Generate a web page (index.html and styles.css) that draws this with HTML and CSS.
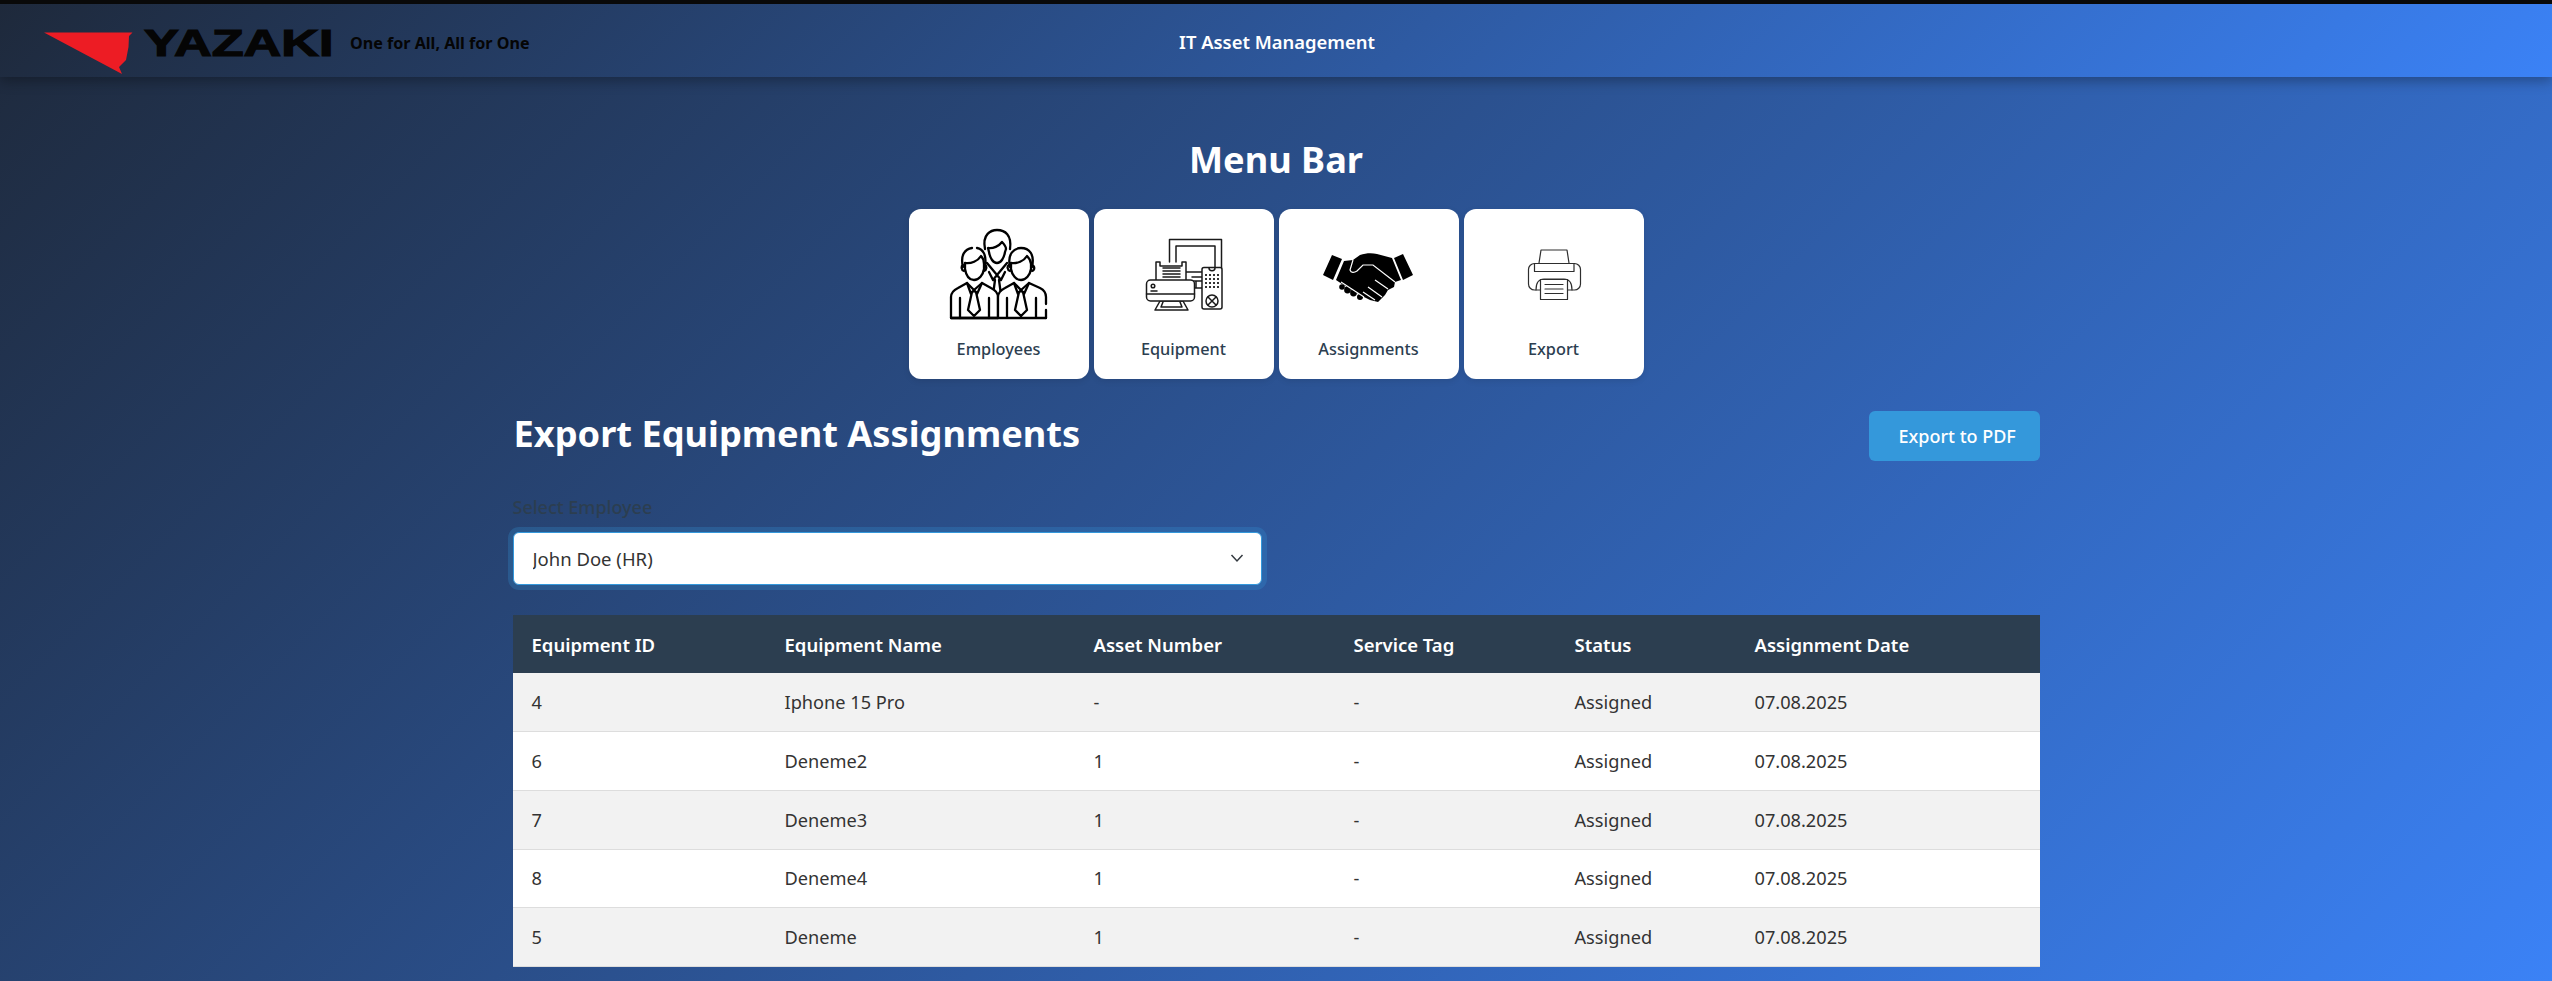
FILE: index.html
```html
<!DOCTYPE html>
<html lang="en">
<head>
<meta charset="utf-8">
<title>IT Asset Management</title>
<link rel="stylesheet" href="styles.css">
</head>
<body>
<div class="top-strip"></div>
<header class="app-header">
  <div class="brand">
    <svg class="brand-mark" viewBox="0 0 90 44" aria-hidden="true"><path d="M0 0.5 H88.500 L85 4 L84.500 15 L82 28 L75 35 L78 42 Z" fill="#ed1c24"/></svg>
    <span class="brand-name">YAZAKI</span>
    <span class="brand-tag">One for All, All for One</span>
  </div>
  <div class="app-title">IT Asset Management</div>
</header>
<main class="page">
  <h1 class="menu-title">Menu Bar</h1>
  <nav class="menu">
    <a class="menu-card">
      <svg class="menu-icon" viewBox="0 0 120 100" aria-hidden="true">
        <g class="ln">
          <path d="M46 24C43 9 52 5 58 5C66 5 73 10 71 24"/>
          <path d="M49 23C54 24 60 21 63 17C65 19 67 21 67 24L66 27C65 33 62 38 58 38C54 38 51 33 50 27Z"/>
          <path d="M48 38L58 50L68 38M58 50L54 55L50 47M58 50L62 55L66 47M56 55L54 70M60 55L62 70"/>
          <path class="wh" d="M24 42C21 30 26 24 33 23M38 23C44 24 48 30 46 42"/>
          <path class="wh" d="M26 38C32 39 39 36 42 31C44 33 45 36 45 39L45 44C44 50 40 55 35 55C30 55 27 50 26 44Z"/>
          <path d="M24 40C22 41 22 45 25 46M46 40C48 41 48 45 45 46"/>
          <path class="wh" d="M12 93V72C12 67 15 65 19 63L28 58L35 65L43 58L52 63C56 65 59 68 59 72V93Z"/>
          <path d="M28 58L32 69L35 65L38 69L43 58M33 67L29 85L35 91L41 85L37 67M21 73V93M50 73V93"/>
          <path class="wh" d="M71 42C68 29 75 23 82 23C90 23 96 29 93 42Z"/>
          <path class="wh" d="M72 38C78 39 85 36 88 31C90 33 92 36 92 39L92 44C91 50 87 55 82 55C77 55 73 50 72 44Z"/>
          <path d="M70 40C68 41 68 45 71 46M93 40C96 41 96 45 93 46"/>
          <path class="wh" d="M59 93V72C59 67 62 65 66 63L75 58L82 65L90 58L101 63C105 65 107 68 107 72V79M107 85V93Z"/>
          <path d="M59 93H107M75 58L79 69L82 65L85 69L90 58M80 67L76 85L82 91L88 85L84 67M68 73V93M97 73V93M12 93H59"/>
        </g>
      </svg>
      <span class="menu-label">Employees</span>
    </a>
    <a class="menu-card">
      <svg class="menu-icon" viewBox="-6 -5 120 100" aria-hidden="true">
        <g class="ln thin">
          <path d="M39.500 32V9.500H91.500V38"/>
          <path d="M46 32V16H85V38"/>
          <path d="M56 42H72M62 47H72M62 51H72M62 58H72M66 51V58"/>
          <path class="wh" d="M26 50V32H30V36H52V32H56V50"/>
          <path d="M33 38H50M33 41H50M33 44H50M33 47H50"/>
          <path class="wh" d="M30 71L25 80H58L53 71Z"/>
          <path d="M33 72L31 77H52L50 72"/>
          <rect class="wh" x="16.500" y="50" width="48" height="21" rx="4"/>
          <path d="M16.500 64H64.500M21 61H27"/>
          <circle cx="23" cy="56" r="1.800"/>
          <rect class="wh" x="72" y="37.500" width="20" height="41.500" rx="2"/>
          <path d="M79 38C79 41.500 85 41.500 85 38"/>
          <circle cx="82" cy="71" r="6"/>
          <path d="M78 67L86 75M86 67L78 75"/>
        </g>
        <g class="dots">
          <rect x="75" y="44" width="2" height="2"/><rect x="79" y="44" width="2" height="2"/><rect x="83" y="44" width="2" height="2"/><rect x="87" y="44" width="2" height="2"/>
          <rect x="75" y="48" width="2" height="2"/><rect x="79" y="48" width="2" height="2"/><rect x="83" y="48" width="2" height="2"/><rect x="87" y="48" width="2" height="2"/>
          <rect x="75" y="52" width="2" height="2"/><rect x="79" y="52" width="2" height="2"/><rect x="83" y="52" width="2" height="2"/><rect x="87" y="52" width="2" height="2"/>
          <rect x="75" y="56" width="2" height="2"/><rect x="79" y="56" width="2" height="2"/><rect x="83" y="56" width="2" height="2"/><rect x="87" y="56" width="2" height="2"/>
        </g>
      </svg>
      <span class="menu-label">Equipment</span>
    </a>
    <a class="menu-card">
      <svg class="menu-icon" viewBox="-1 -15 120 100" aria-hidden="true">
        <path d="M22 15L32 19L23 40L13 35ZM84 18L93 14L103 35L93 40Z"/>
        <path d="M34 21L43 20L50 15C56 13 62 13 67 14L82 18L91 40L85 42L84 47L78 50L75 55L68 62L60 60L52 56L32 44L26 40Z"/>
        <circle cx="32" cy="47" r="2.800"/><circle cx="37.500" cy="50" r="3.400"/><circle cx="43.500" cy="53" r="3.400"/><circle cx="50" cy="57" r="3"/>
        <path class="crease" d="M43 20L40 30C41 33 44 33 47 31L53 25L63 25L85 42M65 40L78 49M58 47L72 57M53 52L65 60M31 42L54 57"/>
      </svg>
      <span class="menu-label">Assignments</span>
    </a>
    <a class="menu-card">
      <svg class="menu-icon" viewBox="-16 -15 120 100" aria-hidden="true">
        <g class="ln hair">
          <path d="M29 23L31 10H57L59 23"/>
          <rect x="18.500" y="23.500" width="52" height="26.500" rx="6"/>
          <rect x="24.500" y="23.500" width="39.500" height="8"/>
          <path d="M26 50C26 43 28 39 34 39H54C60 39 62 43 62 50"/>
          <rect class="wh" x="30.500" y="39.500" width="27" height="20"/>
          <path d="M35 44.500H53M35 49H53M35 53.500H53"/>
        </g>
      </svg>
      <span class="menu-label">Export</span>
    </a>
  </nav>
  <section class="export-panel">
    <div class="panel-head">
      <h2 class="panel-title">Export Equipment Assignments</h2>
      <button class="export-btn" type="button">Export to PDF</button>
    </div>
    <div class="field">
      <label class="field-label" for="emp">Select Employee</label>
      <div class="select-wrap">
        <select id="emp" class="select"><option>John Doe (HR)</option></select>
        <svg class="chevron" viewBox="0 0 16 16" aria-hidden="true"><path d="M2.500 5L8 11L13.500 5" fill="none" stroke="#343a40" stroke-width="1.500"/></svg>
      </div>
    </div>
    <table class="assets">
      <colgroup><col class="c1"><col class="c2"><col class="c3"><col class="c4"><col class="c5"><col class="c6"></colgroup>
      <thead>
        <tr><th>Equipment ID</th><th>Equipment Name</th><th>Asset Number</th><th>Service Tag</th><th>Status</th><th>Assignment Date</th></tr>
      </thead>
      <tbody>
        <tr><td>4</td><td>Iphone 15 Pro</td><td>-</td><td>-</td><td>Assigned</td><td>07.08.2025</td></tr>
        <tr><td>6</td><td>Deneme2</td><td>1</td><td>-</td><td>Assigned</td><td>07.08.2025</td></tr>
        <tr><td>7</td><td>Deneme3</td><td>1</td><td>-</td><td>Assigned</td><td>07.08.2025</td></tr>
        <tr><td>8</td><td>Deneme4</td><td>1</td><td>-</td><td>Assigned</td><td>07.08.2025</td></tr>
        <tr><td>5</td><td>Deneme</td><td>1</td><td>-</td><td>Assigned</td><td>07.08.2025</td></tr>
      </tbody>
    </table>
  </section>
</main>
</body>
</html>
```

FILE: styles.css
```css
* { box-sizing: border-box; }
html, body { margin: 0; height: 100%; }
body {
  min-height: 981px;
  overflow: hidden;
  font-family: "Noto Sans", "Open Sans", sans-serif;
  color: #2c3e50;
  background: linear-gradient(135deg, #1e293b 0%, #3b82f6 100%);
}
.top-strip { height: 4px; background: #0a0a0a; }
.app-header {
  position: relative;
  height: 73px;
  display: flex;
  align-items: center;
  padding-left: 44px;
  background: linear-gradient(135deg, #1e293b 0%, #3b82f6 100%);
  box-shadow: 0 4px 12px rgba(0, 0, 0, 0.3);
}
.brand { display: flex; align-items: center; }
.brand-mark { width: 90px; height: 44px; margin-top: 26px; }
.brand-name {
  margin-left: 10px;
  margin-top: 6px;
  width: 206px;
  font-family: "Liberation Sans", sans-serif;
  font-weight: 700;
  font-size: 36px;
  line-height: 1;
  color: #050505;
  -webkit-text-stroke: 1.2px #050505;
  transform: scaleX(1.45);
  transform-origin: left center;
}
.brand-tag {
  margin-top: 4px;
  font-weight: 700;
  font-size: 16.100px;
  color: #050505;
  white-space: nowrap;
}
.app-title {
  position: absolute;
  left: 2px;
  right: 0;
  top: 27px;
  text-align: center;
  font-weight: 600;
  font-size: 18.400px;
  line-height: 22px;
  color: #fff;
}
.page { width: 1527px; margin: 0 auto; }
.menu-title {
  margin: 58px 0 0;
  text-align: center;
  font-weight: 700;
  font-size: 36.200px;
  line-height: 48px;
  color: #fff;
}
.menu { display: flex; justify-content: center; gap: 5px; margin-top: 26px; }
.menu-card {
  width: 180px;
  height: 170px;
  padding-top: 16px;
  display: flex;
  flex-direction: column;
  align-items: center;
  background: #fff;
  border-radius: 12px;
  box-shadow: 0 2px 6px rgba(0, 0, 0, 0.1);
}
.menu-icon { width: 120px; height: 100px; flex: none; }
.menu-label { margin-top: 14px; font-size: 16.300px; line-height: 20px; font-weight: 500; color: #2c3e50; }
.ln { fill: none; stroke: #000; stroke-width: 2.300; stroke-linejoin: round; stroke-linecap: round; }
.ln.thin { stroke-width: 1.500; stroke: #1a1a1a; }
.ln.hair { stroke-width: 1.200; stroke: #2e2e2e; }
.wh { fill: #fff; }
.dots { fill: #333; }
.crease { fill: none; stroke: #fff; stroke-width: 1.200; }
.panel-head { display: flex; justify-content: space-between; align-items: center; margin-top: 32px; height: 50px; }
.panel-title { margin: -6px 0 0 1px; font-size: 36.200px; font-weight: 700; line-height: 48px; color: #fff; }
.export-btn {
  width: 171px;
  height: 50px;
  padding: 0 20px 0 30px;
  border: 0;
  border-radius: 6px;
  background: #3498db;
  color: #fff;
  font-family: inherit;
  font-size: 18px;
  font-weight: 500;
  text-align: left;
  white-space: nowrap;
}
.field { margin-top: 35px; }
.field-label { display: block; font-size: 18px; line-height: 22px; font-weight: 500; color: #2c3e50; }
.select-wrap { position: relative; width: 749px; height: 53px; margin-top: 14px; }
.select {
  display: block;
  width: 100%;
  height: 100%;
  padding: 0 19px;
  appearance: none;
  border: 1px solid #3498db;
  border-radius: 6px;
  background: #fff;
  box-shadow: 0 0 0 5px rgba(52, 152, 219, 0.25);
  color: #333;
  font-family: inherit;
  font-size: 18.500px;
}
.chevron { position: absolute; right: 17px; top: 18px; width: 16px; height: 16px; }
.assets { width: 1527px; margin-top: 30px; border-collapse: collapse; table-layout: fixed; }
.c1 { width: 253px; } .c2 { width: 309px; } .c3 { width: 260px; }
.c4 { width: 221px; } .c5 { width: 180px; } .c6 { width: 304px; }
.assets th {
  height: 58px;
  padding: 0 19px;
  background: #2c3e50;
  color: #fff;
  font-size: 18.500px;
  font-weight: 600;
  text-align: left;
}
.assets td {
  height: 58.700px;
  padding: 0 19px;
  border-bottom: 1px solid #ddd;
  font-size: 18.200px;
  color: #333;
}
.assets tbody tr:nth-child(odd) { background: #f2f2f2; }
.assets tbody tr:nth-child(even) { background: #fff; }
```
